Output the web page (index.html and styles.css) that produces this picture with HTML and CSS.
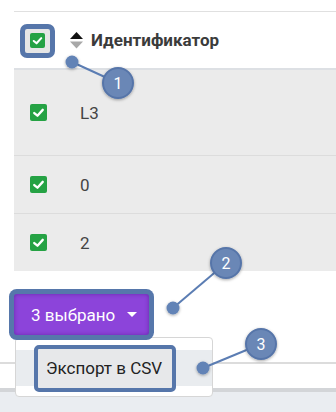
FILE: index.html
```html
<!DOCTYPE html>
<html lang="ru">
<head>
    <meta charset="UTF-8">
    <meta name="viewport" content="width=device-width, initial-scale=1.0">
    <title>Выбор строк</title>
    <link rel="stylesheet" href="styles.css">
</head>
<body>
    <div class="page">
        <div class="table">
            <div class="row head">
                <div class="head-check">
                    <span class="mark">
                        <span class="checkbox small">
                            <svg viewBox="0 0 16 16"><polyline points="4,8.5 7,11 12,5.5"/></svg>
                        </span>
                    </span>
                </div>
                <span class="sort">
                    <svg viewBox="0 0 13 17">
                        <polygon points="6.5,0 13,7 0,7" fill="#111"/>
                        <polygon points="0,9.5 13,9.5 6.5,16.5" fill="#a8a8a8"/>
                    </svg>
                </span>
                <span class="head-title">Идентификатор</span>
            </div>
            <div class="row body first">
                <div class="cell-check">
                    <span class="checkbox">
                        <svg viewBox="0 0 16 16"><polyline points="4,8.5 7,11 12,5.5"/></svg>
                    </span>
                </div>
                <span class="cell-text">L3</span>
            </div>
            <div class="row body">
                <div class="cell-check">
                    <span class="checkbox">
                        <svg viewBox="0 0 16 16"><polyline points="4,8.5 7,11 12,5.5"/></svg>
                    </span>
                </div>
                <span class="cell-text">0</span>
            </div>
            <div class="row body last">
                <div class="cell-check">
                    <span class="checkbox">
                        <svg viewBox="0 0 16 16"><polyline points="4,8.5 7,11 12,5.5"/></svg>
                    </span>
                </div>
                <span class="cell-text">2</span>
            </div>
        </div>

        <div class="actions">
            <div class="dropdown">
                <button class="btn-selected">3 выбрано <span class="caret"></span></button>
                <div class="menu">
                    <div class="menu-item"><span class="mark-item">Экспорт в CSV</span></div>
                </div>
            </div>
        </div>

        <div class="footer">
            <div class="line-thin"></div>
            <div class="line-thick"></div>
            <div class="footer-fill"></div>
        </div>

        <!-- annotation callouts -->
        <svg class="callouts" width="336" height="412" viewBox="0 0 336 412">
            <defs>
                <filter id="shadow" x="-50%" y="-50%" width="200%" height="200%">
                    <feDropShadow dx="0" dy="1" stdDeviation="1.5" flood-color="#000" flood-opacity="0.35"/>
                </filter>
            </defs>
            <g stroke="#5b7db3" stroke-width="2">
                <line x1="72" y1="62" x2="118" y2="83"/>
                <line x1="173" y1="308" x2="226" y2="263"/>
                <line x1="203" y1="368" x2="261" y2="344"/>
            </g>
            <g fill="#6283b6" filter="url(#shadow)">
                <circle cx="72" cy="62" r="6.5"/>
                <circle cx="173" cy="308" r="6.5"/>
                <circle cx="203" cy="368" r="6.5"/>
            </g>
            <g fill="#6a87b6" stroke="#5675a9" stroke-width="2" filter="url(#shadow)">
                <circle cx="118" cy="83" r="15"/>
                <circle cx="226" cy="263" r="15"/>
                <circle cx="261" cy="344" r="15"/>
            </g>
            <g class="num" fill="#fff" text-anchor="middle">
                <text x="118" y="89">1</text>
                <text x="226" y="269">2</text>
                <text x="261" y="350">3</text>
            </g>
        </svg>
    </div>
</body>
</html>
```

FILE: styles.css
```css
body {
    margin: 0;
    padding: 0;
    background-color: #fff;
    font-family: Roboto, "Liberation Sans", Arial, sans-serif;
}
.page {
    position: relative;
    width: 336px;
    height: 412px;
    overflow: hidden;
}
.table {
    margin: 11px 0 0 14px;
    border-top: 1px solid #e0e0e0;
}
.row {
    display: flex;
    align-items: center;
}
.head {
    height: 56px;
    background-color: #fff;
    border-bottom: 2px solid #dde0e4;
}
.head-check {
    width: 50px;
    padding-left: 6px;
    display: flex;
    align-items: center;
}
.mark {
    display: flex;
    align-items: center;
    justify-content: center;
    width: 25px;
    height: 24px;
    border: 5px solid #5676aa;
    border-radius: 7px;
    background-color: #e6e6e6;
    margin-top: 1px;
}
.checkbox {
    display: inline-flex;
    width: 17px;
    height: 17px;
    background-color: #25a244;
    border-radius: 2px;
}
.checkbox.small {
    width: 15px;
    height: 15px;
}
.checkbox svg {
    width: 100%;
    height: 100%;
    fill: none;
    stroke: #fff;
    stroke-width: 2.2;
    stroke-linecap: round;
    stroke-linejoin: round;
}
.sort svg {
    display: block;
    width: 13px;
    height: 17px;
}
.head-title {
    margin-left: 8px;
    font-size: 17px;
    font-weight: bold;
    color: #3b3b3b;
}
.body {
    height: 57px;
    background-color: #ebebeb;
    border-bottom: 1px solid #dcdcdc;
}
.body.first {
    height: 85px;
}
.body.last {
    border-bottom: none;
}
.cell-check {
    width: 50px;
    padding-left: 16px;
    display: flex;
    align-items: center;
}
.cell-text {
    font-size: 17px;
    color: #444;
}
.actions {
    position: relative;
    z-index: 2;
    padding: 23px 0 0 14px;
}
.dropdown {
    position: relative;
    display: inline-block;
}
.btn-selected {
    display: flex;
    align-items: center;
    width: 135px;
    height: 41px;
    padding: 0 0 0 17px;
    border: none;
    border-radius: 3px;
    background-color: #8c44da;
    box-shadow: 0 0 0 5px #5677ab, inset 0 0 4px rgba(80, 20, 140, 0.6);
    color: #fff;
    font-family: Roboto, "Liberation Sans", Arial, sans-serif;
    font-size: 17px;
    position: relative;
    z-index: 2;
}
.caret {
    margin-left: 12px;
    width: 0;
    height: 0;
    border-left: 5px solid transparent;
    border-right: 5px solid transparent;
    border-top: 5px solid #fff;
}
.menu {
    position: absolute;
    left: 1px;
    top: 43px;
    width: 196px;
    padding: 12px 0 10px;
    background-color: #fff;
    border: 1px solid #d6d6d6;
    border-radius: 4px;
}
.menu-item {
    height: 36px;
    padding-left: 18px;
    background-color: #e9ecef;
    display: flex;
    align-items: center;
}
.mark-item {
    box-sizing: border-box;
    display: flex;
    align-items: center;
    height: 47px;
    padding: 0 10px 0 8px;
    background-color: #e7e8ea;
    border: 4px solid #5676aa;
    border-radius: 5px;
    font-size: 17px;
    color: #222;
}
.footer {
    padding-top: 27px;
}
.line-thin {
    height: 2px;
    background-color: #dcdcdc;
}
.line-thick {
    margin-top: 24px;
    height: 4px;
    background-color: #d3d5d8;
}
.footer-fill {
    height: 30px;
    background-color: #eaedf1;
}
.callouts {
    position: absolute;
    left: 0;
    top: 0;
    z-index: 5;
    pointer-events: none;
}
.num {
    font-family: Roboto, "Liberation Sans", Arial, sans-serif;
    font-size: 16px;
}
```
